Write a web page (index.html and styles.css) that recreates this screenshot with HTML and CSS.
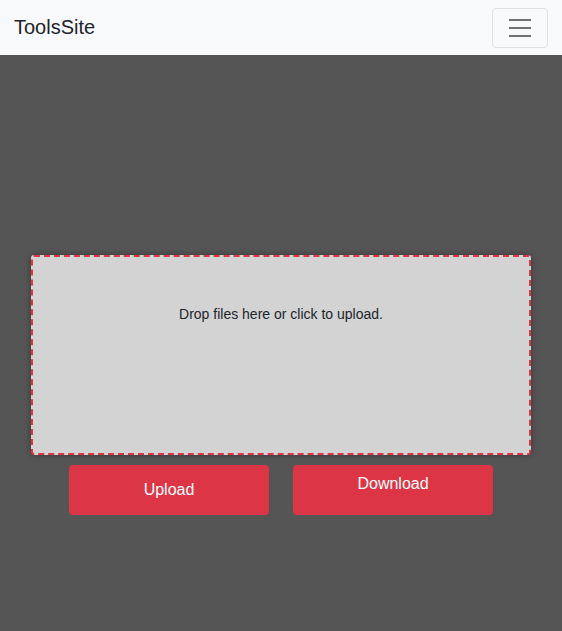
FILE: index.html
```html
<!DOCTYPE html>
<html>
<head>
<meta charset="utf-8">
<link rel="stylesheet" href="styles.css">
</head>
<body>
<nav class="navbar">
  <span class="brand">ToolsSite</span>
  <button class="toggler" aria-label="Toggle navigation">
    <svg width="30" height="30" viewBox="0 0 30 30"><path d="M4 7h22M4 15h22M4 23h22" stroke="rgba(0,0,0,0.55)" stroke-width="2" stroke-linecap="butt"/></svg>
  </button>
</nav>
<main class="main">
  <div class="dropzone">
    <div class="dz-message">Drop files here or click to upload.</div>
  </div>
  <div class="actions">
    <button class="btn btn-upload">Upload</button>
    <a class="btn btn-download">Download</a>
  </div>
</main>
</body>
</html>
```
FILE: styles.css
```css
* { box-sizing: border-box; }
html, body { margin: 0; height: 100%; }
body {
  background: #555555;
  font-family: "Liberation Sans", Arial, sans-serif;
  color: #212529;
}
.navbar {
  height: 55px;
  background: #f8f9fa;
  display: flex;
  align-items: center;
  justify-content: space-between;
  padding: 0 14px 0 14px;
}
.brand {
  font-size: 20px;
  color: #212529;
}
.toggler {
  width: 56px;
  height: 40px;
  margin-top: 1px;
  background: transparent;
  border: 1px solid rgba(0,0,0,0.1);
  border-radius: 4px;
  display: flex;
  align-items: center;
  justify-content: center;
  padding: 0;
}
.main {
  display: flex;
  flex-direction: column;
  align-items: center;
  padding-top: 200px;
}
.dropzone {
  width: 500px;
  height: 200px;
  background: #d3d3d3;
  border: 2px dashed #dc3545;
  border-radius: 3px;
  box-shadow: 0 0 6px rgba(0,0,0,0.35);
  padding: 20px;
  text-align: center;
}
.dz-message {
  margin: 28px 0;
  font-size: 14px;
  line-height: 18px;
}
.actions {
  display: flex;
  gap: 24px;
  margin-top: 10px;
}
.btn {
  width: 200px;
  height: 50px;
  background: #dc3545;
  color: #fff;
  border: none;
  border-radius: 4px;
  font-family: "Liberation Sans", Arial, sans-serif;
  font-size: 16px;
  text-align: center;
}
.btn-upload {
  padding: 0;
  line-height: 50px;
}
.btn-download {
  display: block;
  padding-top: 9px;
  line-height: 20px;
}
```
